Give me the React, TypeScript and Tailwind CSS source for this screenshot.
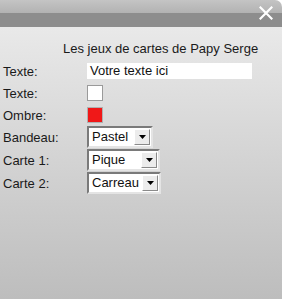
import React from 'react';

const font = { fontFamily: '"Liberation Sans", Arial, sans-serif' };

const Select: React.FC<{ value: string; width: string }> = ({ value, width }) => (
  <div
    className={`flex h-[22px] ${width} items-stretch border-2 border-t-[#7a7a7a] border-l-[#7a7a7a] border-r-[#e4e4e4] border-b-[#e4e4e4] bg-white`}
  >
    <span className="flex-1 pl-[3px] text-[13px] leading-[18px] text-[#111]">{value}</span>
    <span className="m-[1px] flex w-[16px] items-center justify-center border border-t-white border-l-white border-r-[#8a8a8a] border-b-[#8a8a8a] bg-[#ececec]">
      <svg width="7" height="4" viewBox="0 0 7 4">
        <path d="M0 0h7L3.5 4z" fill="#000" />
      </svg>
    </span>
  </div>
);

const Label: React.FC<{ children: React.ReactNode }> = ({ children }) => (
  <span className="text-[13px] leading-[15px] text-[#1a1a1a]">{children}</span>
);

export default function App() {
  return (
    <div className="h-[299px] w-[282px] bg-white" style={font}>
      <div className="flex h-full w-full flex-col overflow-hidden rounded-tr-[7px]">
        <div className="relative flex h-[27px] flex-col">
          <div className="h-[13px] bg-gradient-to-b from-[#c4c4c4] to-[#b2b2b2]" />
          <div className="h-[14px] bg-[#8d8d8d]" />
          <svg className="absolute right-[9px] top-[6px]" width="14" height="14" viewBox="0 0 14 14">
            <path d="M1.5 1.5l11 11M12.5 1.5l-11 11" stroke="#fff" strokeWidth="2.2" strokeLinecap="square" />
          </svg>
        </div>
        <div className="flex flex-1 flex-col bg-gradient-to-b from-[#e9e9e9] to-[#bdbdbd] pl-[3px] pt-[14px]">
          <div className="pl-[60px] text-[13px] leading-[16px] text-[#1a1a1a]">Les jeux de cartes de Papy Serge</div>
          <div className="mt-[6px] grid grid-cols-[84px_1fr] items-center gap-y-[6px]">
            <Label>Texte:</Label>
            <div className="h-[16px] w-[165px] bg-white pl-[3px] text-[13px] leading-[16px] text-[#111]">Votre texte ici</div>
            <Label>Texte:</Label>
            <div className="h-[16px] w-[16px] border border-[#9a9a9a] bg-white" />
            <Label>Ombre:</Label>
            <div className="h-[16px] w-[16px] border border-[#b0b0b0] bg-[#f01818]" />
          </div>
          <div className="mt-[3px] grid grid-cols-[84px_1fr] items-center gap-y-[1px]">
            <Label>Bandeau:</Label>
            <Select value="Pastel" width="w-[66px]" />
            <Label>Carte 1:</Label>
            <Select value="Pique" width="w-[73px]" />
            <Label>Carte 2:</Label>
            <Select value="Carreau" width="w-[74px]" />
          </div>
        </div>
      </div>
    </div>
  );
}
